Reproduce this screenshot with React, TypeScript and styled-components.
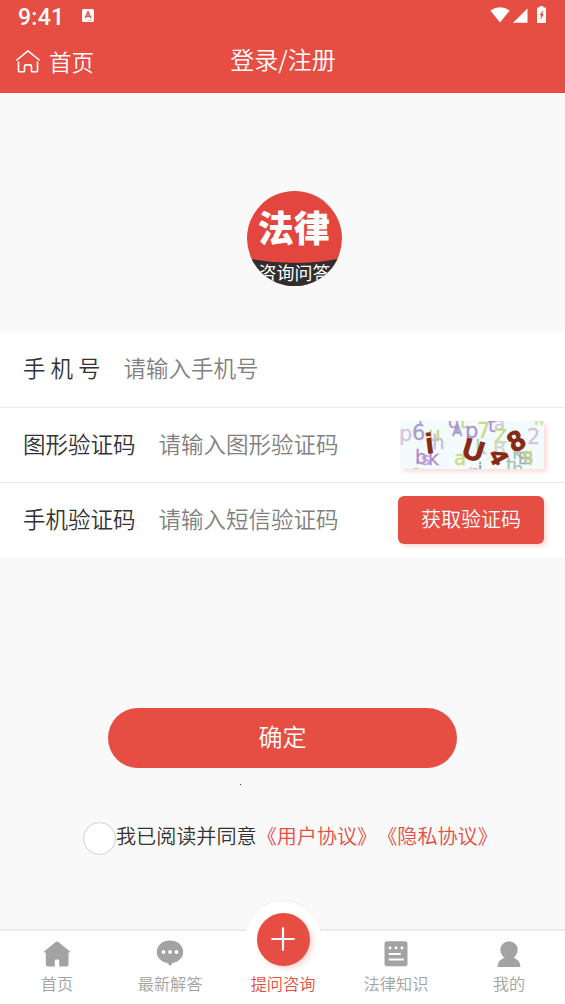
import React from "react";
import styled, { createGlobalStyle } from "styled-components";

const RED = "#e64d43";

const GlobalStyle = createGlobalStyle`
  * { box-sizing: border-box; }
  body {
    margin: 0;
    background: #f9f9f9;
    font-family: "Noto Sans CJK SC", sans-serif;
    font-weight: 350;
    color: #333;
    text-spacing-trim: space-all;
  }
  input, button { font: inherit; border: 0; outline: 0; padding: 0; }
`;

const Page = styled.div`
  display: flex;
  flex-direction: column;
  width: 565px;
  height: 1004px;
  overflow: hidden;
`;

const Header = styled.header`
  height: 93px;
  flex: none;
  background: ${RED};
  color: #fff;
`;

const StatusBar = styled.div`
  display: flex;
  align-items: flex-start;
  height: 31px;
  padding: 0 18px;
`;

const Clock = styled.span`
  font: 500 23px/36px Roboto, sans-serif;
  letter-spacing: 0.3px;
  width: 64px;
`;

const Notice = styled.svg`
  margin-top: 9px;
`;

const StatusIcons = styled.svg`
  margin-left: auto;
  margin-top: 6px;
`;

const TitleBar = styled.div`
  display: grid;
  grid-template-columns: 1fr auto 1fr;
  height: 62px;
  padding: 0 15px 0 16px;
`;

const HomeLink = styled.a`
  display: flex;
  align-items: flex-start;
  gap: 9px;
  padding-top: 18px;
  font-size: 22.5px;
  line-height: 24px;
`;

const HomeIcon = styled.svg`
  margin-top: 1px;
`;

const Title = styled.h1`
  margin: 0;
  font-size: 24px;
  font-weight: inherit;
  line-height: 56px;
`;

const LogoArea = styled.div`
  height: 239px;
  flex: none;
  display: flex;
  justify-content: center;
  padding: 98px 0 0 24px;
`;

const Form = styled.form`
  background: #fff;
  flex: none;
`;

const Field = styled.div<{ $first?: boolean; $last?: boolean }>`
  display: flex;
  align-items: center;
  height: ${(p) => (p.$first ? 76 : 75)}px;
  padding: 0 21px ${(p) => (p.$first || p.$last ? 1 : 0)}px 23px;
  border-bottom: ${(p) => (p.$last ? "0" : "1px solid #ebebeb")};
  font-size: 22.5px;
`;

const Label = styled.label`
  flex: none;
  margin-right: 23px;
  padding-bottom: 4px;
  white-space: pre;
`;

const Input = styled.input`
  flex: 1;
  min-width: 0;
  height: 40px;
  padding-bottom: 4px;
  background: transparent;
  &::placeholder { color: #808080; opacity: 1; }
`;

const Captcha = styled.svg`
  flex: none;
  background: #f4fbfd;
  box-shadow: 3px 3px 4px rgba(230, 77, 67, 0.18);
`;

const CodeButton = styled.button`
  flex: none;
  width: 146px;
  height: 48px;
  padding-bottom: 3px;
  border-radius: 6px;
  background: ${RED};
  color: #fff;
  font-size: 20px;
  box-shadow: 3px 3px 4px rgba(230, 77, 67, 0.18);
`;

const Submit = styled.button`
  flex: none;
  align-self: center;
  width: 349px;
  height: 60px;
  margin: 150px 0 0;
  padding-bottom: 5px;
  border-radius: 30px;
  background: ${RED};
  color: #fff;
  font-size: 24px;
`;

const Dot = styled.i`
  flex: none;
  width: 1px;
  height: 1px;
  margin: 16px 0 0 240px;
  background: #2b2b91;
`;

const Agreement = styled.div`
  display: flex;
  flex: none;
  margin: 37px 0 0 83px;
  font-size: 20.1px;
  line-height: 27px;
  white-space: nowrap;
`;

const Check = styled.span`
  width: 33px;
  height: 33px;
  border: 1px solid #d2d2d2;
  border-radius: 50%;
  background: #fff;
`;

const Policy = styled.a`
  color: ${RED};
`;

const TabBar = styled.nav`
  display: grid;
  grid-template-columns: repeat(5, 1fr);
  flex: none;
  height: 75px;
  margin-top: auto;
  border-top: 2px solid #ebebeb;
  background: #fff;
`;

const Tab = styled.a<{ $active?: boolean }>`
  display: flex;
  flex-direction: column;
  align-items: center;
  padding: 9px 0 0 1px;
  color: ${(p) => (p.$active ? RED : "#a3a3a3")};
  font-size: 16.2px;
  line-height: 24px;
`;

const TabIcon = styled.svg`
  display: block;
  flex: none;
  margin-bottom: 3px;
`;

const AskButton = styled.span`
  display: flex;
  align-items: center;
  justify-content: center;
  flex: none;
  width: 76px;
  height: 76px;
  margin: -39px 0 -6px;
  border-radius: 50%;
  background: #fff;
  box-shadow: 0 -1px 2px rgba(0, 0, 0, 0.04);
`;

const AskDisc = styled.span`
  display: flex;
  align-items: center;
  justify-content: center;
  width: 53px;
  height: 53px;
  border-radius: 50%;
  background: ${RED};
  box-shadow: 3px 3px 5px rgba(230, 77, 67, 0.2);
`;

const TabLabel = styled.span`
  position: relative;
`;

function Logo() {
  return (
    <svg width="95" height="95" viewBox="0 0 95 95">
      <defs>
        <clipPath id="disc"><circle cx="47.5" cy="47.5" r="47.5" /></clipPath>
      </defs>
      <g clipPath="url(#disc)" fill="#fff" textAnchor="middle">
        <rect width="95" height="95" fill="#e3463e" />
        <path d="M0 67Q47 77 95 67V95H0Z" fill="#302e2f" />
        <text x="46.700" y="50.500" fontSize="36" fontWeight="900">法律</text>
        <text x="47.5" y="88.5" fontSize="18" fontWeight="400">咨询问答</text>
      </g>
    </svg>
  );
}

type Noise = [string, number, number, number, string];
type Code = [string, number, number, number, number];

const noise: Noise[] = [
  ["p", -1, 20, 21, "#d9c4e0"],
  ["6", 12, 19, 21, "#ad9bd3"],
  ["i", 18, 3, 17, "#a997d1"],
  ["u", 28, 20, 20, "#c5d77b"],
  ["h", 32, 28, 20, "#c9bbda"],
  ["b", 15, 43, 19, "#b08ad0"],
  ["s", 21, 44, 18, "#bfa3d8"],
  ["k", 28, 44, 19, "#b18bd0"],
  ["a", 11, 57, 18, "#c7dc86"],
  ["q", 48, 7, 18, "#ac97cd"],
  ["A", 52, 15, 15, "#a698cb"],
  ["L", 60, 7, 17, "#c1d99b"],
  ["p", 65, 17, 21, "#ad91db"],
  ["7", 77, 17, 21, "#c6da8a"],
  ["k", 75, 33, 20, "#a2d8c5"],
  ["a", 54, 44, 20, "#c9dc84"],
  ["n", 68, 58, 19, "#a5c8b8"],
  ["i", 78, 53, 15, "#819baa"],
  ["t", 88, 11, 19, "#aa94d4"],
  ["a", 94, 9, 18, "#d6c2dd"],
  ["Z", 94, 22, 19, "#c4dc8b"],
  ["B", 93, 34, 19, "#cad9ca"],
  ["k", 112, 38, 20, "#a2c6b3"],
  ["t", 106, 51, 19, "#a4c5b1"],
  ["h", 112, 54, 18, "#a9c8b6"],
  ["E", 118, 43, 15, "#a6aeb9"],
  ["B", 123, 43, 15, "#b0b3c2"],
  ["q", 122, 40, 17, "#c5d77d"],
  ["2", 127, 23, 21, "#d6c3e0"],
  ["w", 133, 4, 15, "#d4e3a7"],
];

// glyph, centre x, centre y, size, tilt in degrees
const code: Code[] = [
  ["i", 29.5, 22, 28, -7],
  ["U", 73.5, 28.5, 29, 17],
  ["4", 99, 35.5, 25, 62],
  ["8", 116, 19.5, 28, -28],
];

function CaptchaImage() {
  return (
    <Captcha width="144" height="48" viewBox="0 0 144 48">
      <g fontFamily="DejaVu Sans, sans-serif" fontWeight="400">
        {noise.map(([c, x, y, size, fill], i) => (
          <text key={i} x={x} y={y} fontSize={size} fill={fill} stroke={fill} strokeWidth="0.3">{c}</text>
        ))}
      </g>
      <g fontFamily="Liberation Sans, sans-serif" fontWeight="700" fill="#892815" stroke="#892815" strokeWidth="0.9" textAnchor="middle">
        {code.map(([c, x, y, size, tilt]) => (
          <text key={c} x={x} y={y + size * 0.36} fontSize={size} transform={`rotate(${tilt} ${x} ${y})`}>{c}</text>
        ))}
      </g>
    </Captcha>
  );
}

export default function App() {
  return (
    <Page>
      <GlobalStyle />
      <Header>
        <StatusBar>
          <Clock>9:41</Clock>
          <Notice width="12" height="13" viewBox="0 0 12 13">
            <rect width="12" height="13" rx="1.5" fill="#fff" />
            <path d="M3.3 9 6 3l2.7 6M4.2 7.2h3.6" fill="none" stroke={RED} strokeWidth="1.5" />
            <path d="M6.5 11.3h4" stroke={RED} strokeWidth=".8" strokeDasharray="1 .7" />
          </Notice>
          <StatusIcons width="58" height="18" viewBox="0 0 58 18" fill="#fff">
            <path d="M1.3 4.500Q11-2 20.700 4.500L11 16.500Z" />
            <path d="M38.500 2.500V16.700H24Z" />
            <path fillRule="evenodd" d="M50.700 0h3.600v1.600h1.700q1 0 1 1v13.400q0 1-1 1h-7q-1 0-1-1v-13.400q0-1 1-1h1.700ZM54.200 4l-3.700 5.200h1.600l-.8 4.500 3.600-5.500h-1.600Z" />
          </StatusIcons>
        </StatusBar>
        <TitleBar>
          <HomeLink>
            <HomeIcon width="24" height="23" viewBox="0 0 24 23" fill="none" stroke="#fff" strokeWidth="1.6" strokeLinejoin="round" strokeLinecap="round">
              <path d="M.8 10 12 .9 23.2 10" />
              <path d="M2.500 12v9q0 .8.8.8h5.200v-5.300q0-1.600 1.600-1.600h3.800q1.600 0 1.600 1.600v5.300h5.200q.8 0 .8-.8v-9" />
            </HomeIcon>
            首页
          </HomeLink>
          <Title>登录/注册</Title>
        </TitleBar>
      </Header>
      <LogoArea><Logo /></LogoArea>
      <Form>
        <Field $first>
          <Label>手 机 号</Label>
          <Input placeholder="请输入手机号" />
        </Field>
        <Field>
          <Label>图形验证码</Label>
          <Input placeholder="请输入图形验证码" />
          <CaptchaImage />
        </Field>
        <Field $last>
          <Label>手机验证码</Label>
          <Input placeholder="请输入短信验证码" />
          <CodeButton type="button">获取验证码</CodeButton>
        </Field>
      </Form>
      <Submit>确定</Submit>
      <Dot />
      <Agreement>
        <Check />
        <span>我已阅读并同意</span>
        <Policy>《用户协议》</Policy>
        <Policy>《隐私协议》</Policy>
      </Agreement>
      <TabBar>
        <Tab>
          <TabIcon width="28" height="28" viewBox="0 0 28 28" fill="currentColor">
            <path d="M12.6 2q1.4-1 2.8 0L27 11.4q.8 1-.5 1.2H25.500v11.800q0 2-2 2H16.200V20.500q0-1-1-1h-2.400q-1 0-1 1v5.900H4.800q-2 0-2-2V12.600H1.500Q.2 12.400 1 11.400Z" />
          </TabIcon>
          <TabLabel>首页</TabLabel>
        </Tab>
        <Tab>
          <TabIcon width="28" height="28" viewBox="0 0 28 28">
            <path d="M14 .5C21.500.5 27.200 5.300 27.200 12c0 5.600-4.300 9.700-9.900 10.800Q15.700 23.300 14 26.200Q12.300 23.300 10.700 22.800C5.100 21.700.8 17.600.8 12 .8 5.300 6.500.5 14 .5Z" fill="currentColor" />
            <g fill="#fff"><circle cx="7.500" cy="12" r="1.900" /><circle cx="14" cy="12" r="1.900" /><circle cx="20.500" cy="12" r="1.900" /></g>
          </TabIcon>
          <TabLabel>最新解答</TabLabel>
        </Tab>
        <Tab $active>
          <AskButton>
            <AskDisc>
              <svg width="24" height="24" viewBox="0 0 24 24" stroke="#fff" strokeWidth="2.200" strokeLinecap="round">
                <path d="M12 1.200v21.600M1.200 12h21.600" />
              </svg>
            </AskDisc>
          </AskButton>
          <TabLabel>提问咨询</TabLabel>
        </Tab>
        <Tab>
          <TabIcon width="28" height="28" viewBox="0 0 28 28">
            <rect x="2.500" y="1.300" width="23" height="25" rx="2.500" fill="currentColor" />
            <g fill="#fff"><circle cx="8" cy="7.800" r="1.500" /><circle cx="14" cy="7.800" r="1.500" /><circle cx="20" cy="7.800" r="1.500" /></g>
            <path d="M7.500 14h10.500M7.500 19.500h13.500" stroke="#fff" strokeWidth="2" strokeLinecap="round" />
          </TabIcon>
          <TabLabel>法律知识</TabLabel>
        </Tab>
        <Tab>
          <TabIcon width="28" height="28" viewBox="0 0 28 28" fill="currentColor">
            <circle cx="14" cy="10" r="8.700" />
            <path d="M10 16h8q0 1.800 2.500 2.800 4.700 2 5 8.200h-23q.3-6.200 5-8.200Q10 17.800 10 16Z" />
          </TabIcon>
          <TabLabel>我的</TabLabel>
        </Tab>
      </TabBar>
    </Page>
  );
}
